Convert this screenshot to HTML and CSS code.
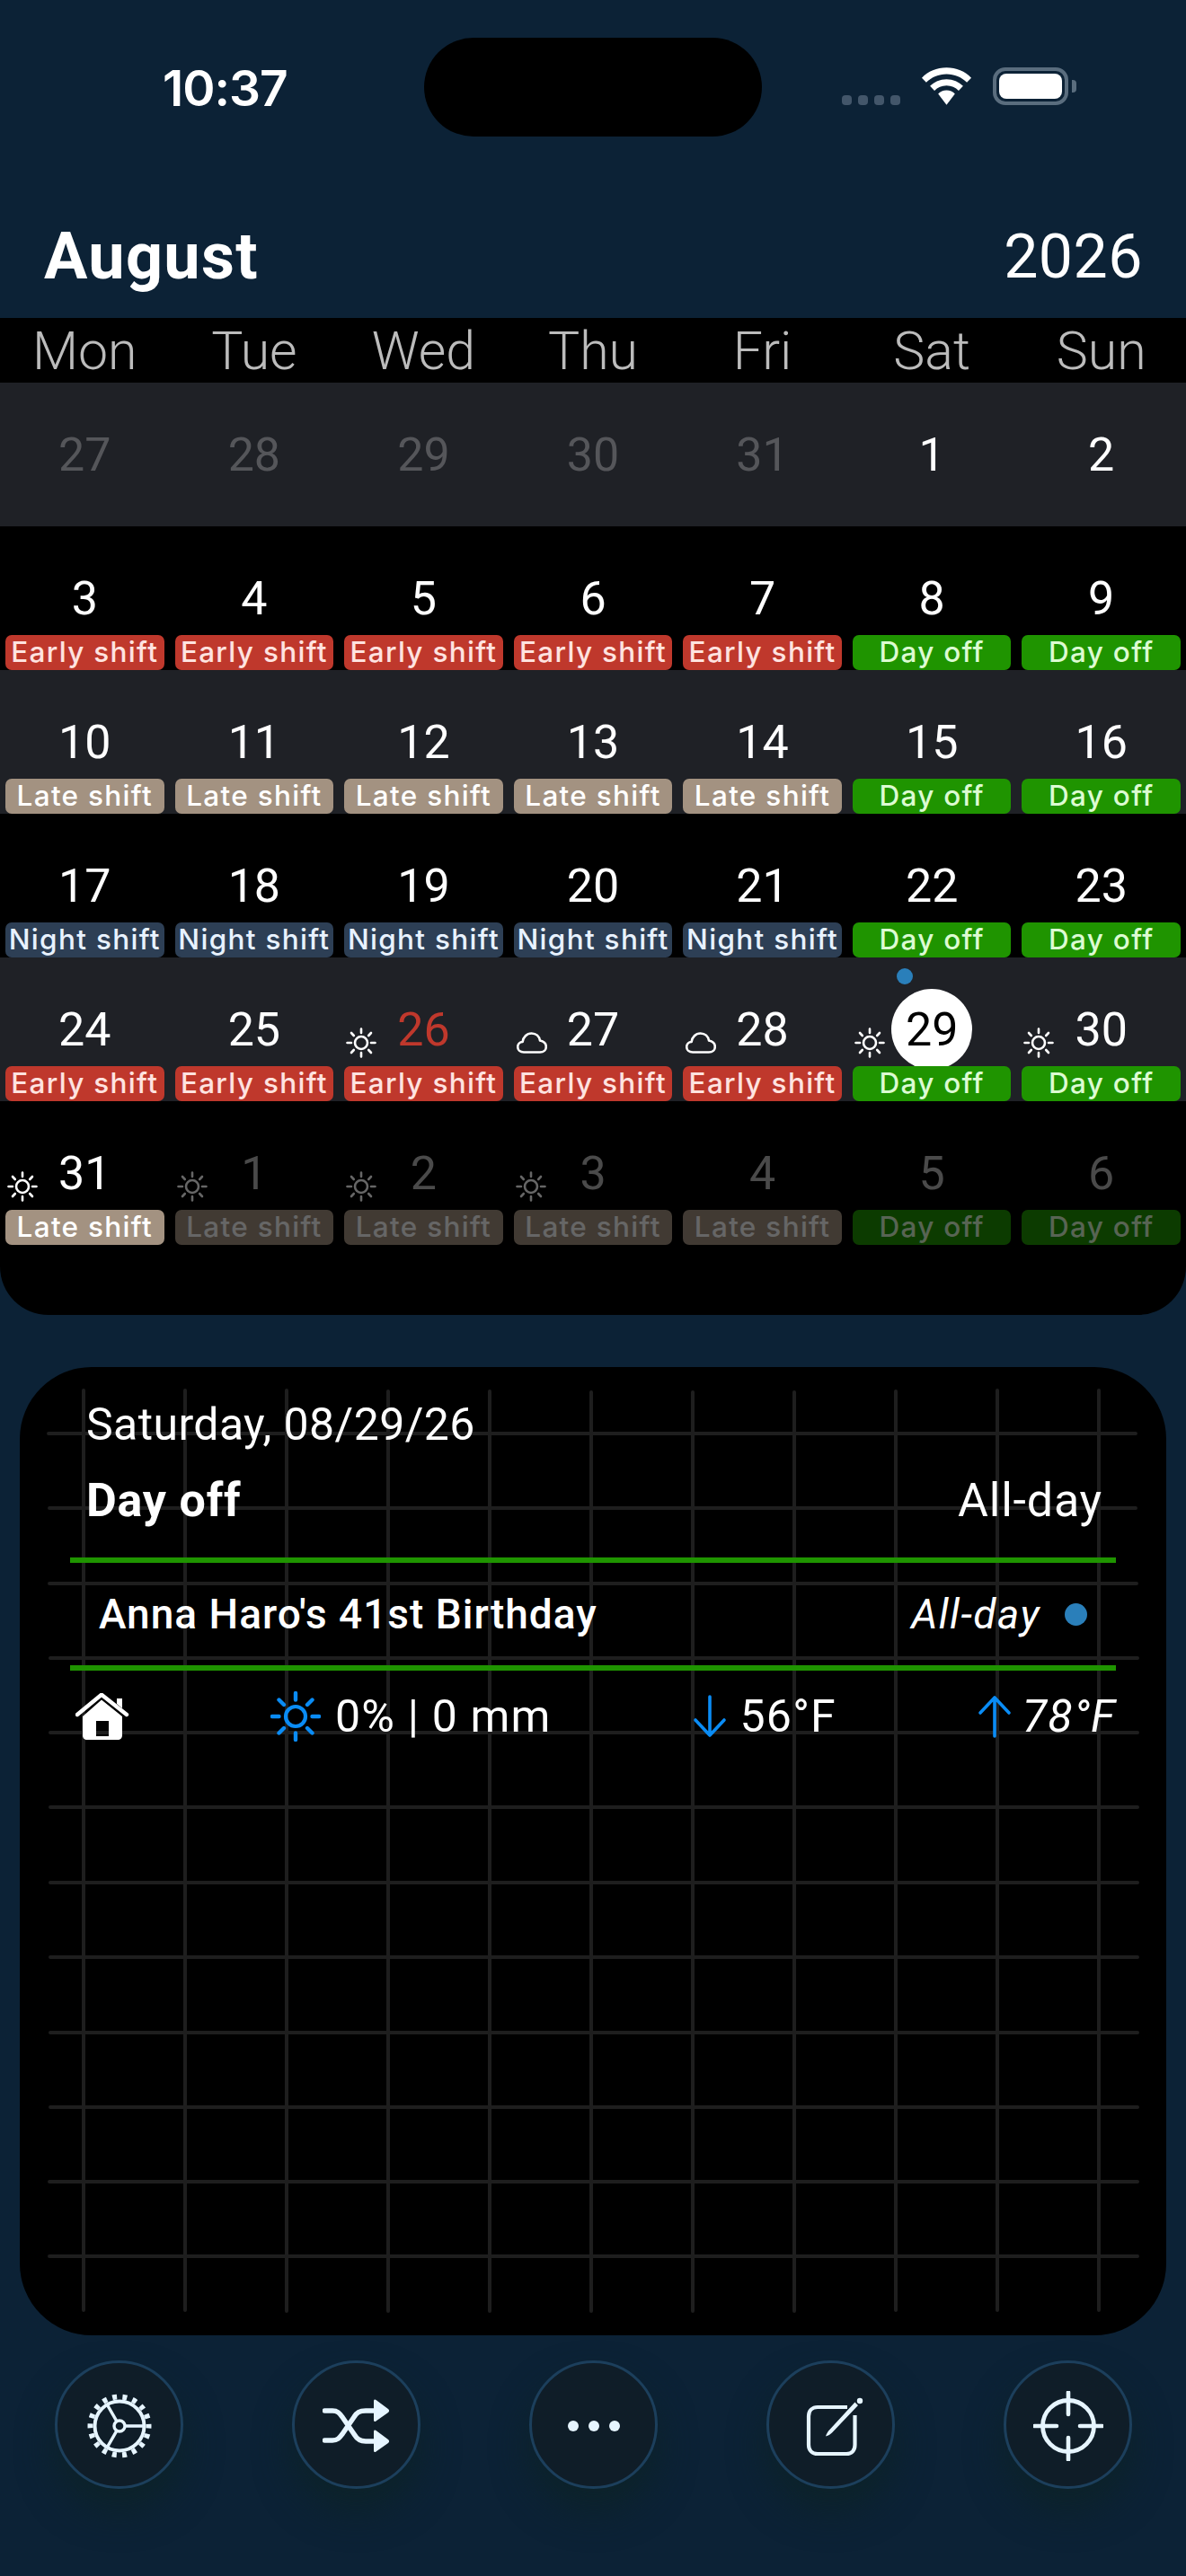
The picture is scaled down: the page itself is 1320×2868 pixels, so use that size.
FILE: index.html
```html
<!DOCTYPE html>
<html lang="en">
<head>
  <meta charset="UTF-8">
  <title>Shift Calendar</title>
  <meta name="viewport" content="width=device-width, initial-scale=1.0">
  <link rel="stylesheet" href="styles.css">
</head>
<body>
  <svg class="sprites" width="0" height="0">
    <symbol id="sun" viewBox="0 0 34 34">
      <circle cx="17" cy="17" r="7" fill="none" stroke="currentColor" stroke-width="2.6"/>
      <g stroke="currentColor" stroke-width="2.6" stroke-linecap="round">
        <path d="M17 1.500V6M17 28V32.500M1.500 17H6M28 17H32.500M6 6L8.800 9M25.200 25L28 28M28 6L25.200 9M8.800 25L6 28"/>
      </g>
    </symbol>
    <symbol id="cloud" viewBox="0 0 34 24">
      <path d="M8 22.500C4 22.500 1.200 20 1.200 16.600C1.200 13.400 3.600 11.200 6.600 11C7.400 5.600 11.200 1.500 16.600 1.500C21.800 1.500 25.200 5 26 9.600C29.800 10.400 32.800 12.600 32.800 16.400C32.800 20 30 22.500 26 22.500Z" fill="none" stroke="currentColor" stroke-width="2.6" stroke-linejoin="round"/>
    </symbol>
  </svg>

  <header class="status-bar">
    <span class="clock">10:37</span>
    <div class="island"></div>
    <div class="status-icons">
      <div class="signal"><i></i><i></i><i></i><i></i></div>
      <svg class="wifi" viewBox="0 0 58 42">
        <path d="M29 0C18 0 8 4.300 1 11.500L6 16.800C11.800 10.900 20 7.300 29 7.300C38 7.300 46.200 10.900 52 16.800L57 11.500C50 4.300 40 0 29 0Z" fill="#fff"/>
        <path d="M29 13C21.600 13 15 16 10.300 20.800L15.300 26C18.800 22.400 23.600 20.200 29 20.200C34.400 20.200 39.200 22.400 42.700 26L47.700 20.800C43 16 36.400 13 29 13Z" fill="#fff"/>
        <path d="M29 25.600C25.200 25.600 21.900 27.100 19.500 29.600L29 42L38.500 29.600C36.100 27.100 32.800 25.600 29 25.600Z" fill="#fff"/>
      </svg>
      <div class="battery"><div class="battery-level"></div></div>
      <div class="battery-nub"></div>
    </div>
  </header>

  <section class="calendar">
    <div class="month-title">
      <h1>August</h1>
      <span class="year">2026</span>
    </div>
    <div class="weekdays">
      <span>Mon</span><span>Tue</span><span>Wed</span><span>Thu</span><span>Fri</span><span>Sat</span><span>Sun</span>
    </div>
    <div class="weeks">
      <div class="week alt">
        <div class="day muted"><span class="num">27</span></div>
        <div class="day muted"><span class="num">28</span></div>
        <div class="day muted"><span class="num">29</span></div>
        <div class="day muted"><span class="num">30</span></div>
        <div class="day muted"><span class="num">31</span></div>
        <div class="day"><span class="num">1</span></div>
        <div class="day"><span class="num">2</span></div>
      </div>
      <div class="week">
        <div class="day"><span class="num">3</span><span class="pill early">Early shift</span></div>
        <div class="day"><span class="num">4</span><span class="pill early">Early shift</span></div>
        <div class="day"><span class="num">5</span><span class="pill early">Early shift</span></div>
        <div class="day"><span class="num">6</span><span class="pill early">Early shift</span></div>
        <div class="day"><span class="num">7</span><span class="pill early">Early shift</span></div>
        <div class="day"><span class="num">8</span><span class="pill off">Day off</span></div>
        <div class="day"><span class="num">9</span><span class="pill off">Day off</span></div>
      </div>
      <div class="week alt">
        <div class="day"><span class="num">10</span><span class="pill late">Late shift</span></div>
        <div class="day"><span class="num">11</span><span class="pill late">Late shift</span></div>
        <div class="day"><span class="num">12</span><span class="pill late">Late shift</span></div>
        <div class="day"><span class="num">13</span><span class="pill late">Late shift</span></div>
        <div class="day"><span class="num">14</span><span class="pill late">Late shift</span></div>
        <div class="day"><span class="num">15</span><span class="pill off">Day off</span></div>
        <div class="day"><span class="num">16</span><span class="pill off">Day off</span></div>
      </div>
      <div class="week">
        <div class="day"><span class="num">17</span><span class="pill night">Night shift</span></div>
        <div class="day"><span class="num">18</span><span class="pill night">Night shift</span></div>
        <div class="day"><span class="num">19</span><span class="pill night">Night shift</span></div>
        <div class="day"><span class="num">20</span><span class="pill night">Night shift</span></div>
        <div class="day"><span class="num">21</span><span class="pill night">Night shift</span></div>
        <div class="day"><span class="num">22</span><span class="pill off">Day off</span></div>
        <div class="day"><span class="num">23</span><span class="pill off">Day off</span></div>
      </div>
      <div class="week alt">
        <div class="day"><span class="num">24</span><span class="pill early">Early shift</span></div>
        <div class="day"><span class="num">25</span><span class="pill early">Early shift</span></div>
        <div class="day"><svg class="wx"><use href="#sun"/></svg><span class="num sunday-red">26</span><span class="pill early">Early shift</span></div>
        <div class="day"><svg class="wx cloud"><use href="#cloud"/></svg><span class="num">27</span><span class="pill early">Early shift</span></div>
        <div class="day"><svg class="wx cloud"><use href="#cloud"/></svg><span class="num">28</span><span class="pill early">Early shift</span></div>
        <div class="day today"><i class="event-dot"></i><svg class="wx"><use href="#sun"/></svg><span class="num">29</span><span class="pill off">Day off</span></div>
        <div class="day"><svg class="wx"><use href="#sun"/></svg><span class="num">30</span><span class="pill off">Day off</span></div>
      </div>
      <div class="week">
        <div class="day"><svg class="wx"><use href="#sun"/></svg><span class="num">31</span><span class="pill late">Late shift</span></div>
        <div class="day muted"><svg class="wx"><use href="#sun"/></svg><span class="num">1</span><span class="pill late">Late shift</span></div>
        <div class="day muted"><svg class="wx"><use href="#sun"/></svg><span class="num">2</span><span class="pill late">Late shift</span></div>
        <div class="day muted"><svg class="wx"><use href="#sun"/></svg><span class="num">3</span><span class="pill late">Late shift</span></div>
        <div class="day muted"><span class="num">4</span><span class="pill late">Late shift</span></div>
        <div class="day muted"><span class="num">5</span><span class="pill off">Day off</span></div>
        <div class="day muted"><span class="num">6</span><span class="pill off">Day off</span></div>
      </div>
    </div>
  </section>

  <section class="panel">
    <svg class="grid" viewBox="0 0 1276 1078">
      <g stroke="#1e1e1e" stroke-width="4" stroke-linecap="round">
        <path d="M71 26V1050M184 26V1050M297 26V1051M410 27V1051M523 27V1051M636 28V1051M749 28V1051M862 28V1051M975 27V1050M1088 26V1050M1201 26V1050"/>
        <path d="M32 74H1242M33 157H1242M33 241H1243M34 324H1244M34 407H1244M34 490H1244M34 574H1244M34 657H1244M34 741H1244M34 824H1244M33 907H1244M33 990H1244"/>
      </g>
    </svg>
    <div class="panel-body">
      <div class="panel-date">Saturday, 08/29/26</div>
      <div class="shift-row">
        <strong>Day off</strong>
        <span>All-day</span>
      </div>
      <div class="event-row">
        <span class="event-name">Anna Haro's 41st Birthday</span>
        <em>All-day</em>
        <i class="event-mark"></i>
      </div>
      <div class="weather-row">
        <svg class="home" viewBox="0 0 60 52">
          <path d="M2 24L29 1.800L57 24" fill="none" stroke="#fff" stroke-width="4.400" stroke-linecap="round" stroke-linejoin="round"/>
          <path d="M46 6H52V17L46 12Z" fill="#fff"/>
          <path d="M29 7.500L52 26V47C52 50 50 52 47 52H13C10 52 8 50 8 47V26ZM23 31V48H37V31Z" fill="#fff" fill-rule="evenodd"/>
        </svg>
        <div class="wx-rain">
          <svg class="wx-sun" viewBox="0 0 56 56">
            <circle cx="28" cy="28" r="11" fill="none" stroke="#0a8cf5" stroke-width="4.200"/>
            <path d="M28 2V9.500M28 46.500V54M2 28H9.500M46.500 28H54M9.500 9.500L15 15M41 41L46.500 46.500M46.500 9.500L41 15M15 41L9.500 46.500" stroke="#0a8cf5" stroke-width="4.400" stroke-linecap="round"/>
          </svg>
          <span>0% | 0 mm</span>
        </div>
        <div class="wx-low">
          <svg class="arrow" viewBox="0 0 38 48"><path d="M19 2V45M3 28L19 45L35 28" fill="none" stroke="#0a8cf5" stroke-width="3.600" stroke-linecap="round" stroke-linejoin="round"/></svg>
          <span>56°F</span>
        </div>
        <div class="wx-high">
          <svg class="arrow" viewBox="0 0 38 48"><path d="M19 46V3M3 20L19 3L35 20" fill="none" stroke="#0a8cf5" stroke-width="3.600" stroke-linecap="round" stroke-linejoin="round"/></svg>
          <em>78°F</em>
        </div>
      </div>
    </div>
  </section>

  <nav class="toolbar">
    <button type="button">
      <svg viewBox="0 0 72 72" width="72" height="72" fill="none" stroke="#e6f5ff">
        <circle cx="36" cy="36" r="32.500" stroke-width="6" stroke-dasharray="5 6.345" stroke-dashoffset="2.500"/>
        <circle cx="36" cy="36" r="27.500" stroke-width="4"/>
        <circle cx="36" cy="36" r="6" stroke-width="3.400"/>
        <path d="M42 36H63M33 30.800L22.500 12.600M33 41.200L22.500 59.400" stroke-width="3.400"/>
      </svg>
    </button>
    <button type="button">
      <svg viewBox="0 0 76 60" width="76" height="60" fill="none">
        <path d="M2.500 13H11C17 13 19 16 22 20L35 39C38 44 41 47 48 47H58M2.500 46H11C17 46 19 43 22 39L35 20C38 15 41 13 48 13H58" stroke="#e6f5ff" stroke-width="5.500" stroke-linecap="round"/>
        <path d="M57 2C57 0.500 58.500 0 59.500 1L73 11C74.500 12 74.500 14 73 15L59.500 24.500C58.500 25.500 57 25 57 23.500Z" fill="#e6f5ff"/>
        <path d="M57 36C57 34.500 58.500 34 59.500 35L73 45C74.500 46 74.500 48 73 49L59.500 58.500C58.500 59.500 57 59 57 57.500Z" fill="#e6f5ff"/>
      </svg>
    </button>
    <button type="button">
      <svg viewBox="0 0 58 12" width="58" height="12" fill="#e6f5ff">
        <circle cx="6" cy="6" r="6"/><circle cx="29" cy="6" r="6"/><circle cx="52" cy="6" r="6"/>
      </svg>
    </button>
    <button type="button">
      <svg viewBox="0 0 72 72" width="72" height="72" fill="none" stroke="#e6f5ff">
        <path d="M62.500 24V57C62.500 63 59 67 53 67H21C15 67 11 63 11 57V25C11 19 15 15 21 15H54" stroke-width="4.200"/>
        <path d="M30 47.500C31 44.500 32.500 42 34 40.500L62.500 9.500L66 13L37 43.500C35 45.500 33 46.500 30 47.500Z" fill="#e6f5ff" stroke="none"/>
        <circle cx="68" cy="8" r="3.200" fill="#e6f5ff" stroke="none"/>
      </svg>
    </button>
    <button type="button">
      <svg viewBox="0 0 78 78" width="78" height="78" fill="none" stroke="#e6f5ff" stroke-linecap="round">
        <circle cx="39" cy="39" r="28.500" stroke-width="4.800"/>
        <path d="M39 1.500V26M39 52V76.500M1.500 39H26M52 39H76.500" stroke-width="4.600"/>
      </svg>
    </button>
  </nav>
</body>
</html>
```

FILE: styles.css
```css
* {
  box-sizing: border-box;
}

body {
  margin: 0;
  width: 1320px;
  height: 2868px;
  overflow: hidden;
  background: #0c2236;
  color: #fff;
  font-family: Roboto, "Liberation Sans", sans-serif;
}

.sprites {
  display: block;
  height: 0;
}

/* status bar */
.status-bar {
  height: 190px;
  padding-top: 42px;
  display: flex;
  align-items: flex-start;
  position: relative;
}

.clock {
  position: absolute;
  left: 181px;
  top: 68px;
  font-size: 55px;
  line-height: 60px;
  font-weight: 600;
  font-family: Inter, sans-serif;
  letter-spacing: -1px;
}

.island {
  width: 376px;
  height: 110px;
  margin-left: 472px;
  border-radius: 55px;
  background: #000;
}

.status-icons {
  display: flex;
  align-items: flex-end;
  margin-left: 89px;
  margin-top: 33px;
  height: 42px;
}

.signal {
  display: flex;
  gap: 7px;
}

.signal i {
  width: 11px;
  height: 11px;
  border-radius: 4px;
  background: #43566a;
}

.wifi {
  width: 57px;
  height: 42px;
  margin-left: 23px;
}

.battery {
  width: 84px;
  height: 42px;
  margin-left: 23px;
  padding: 3px;
  border: 4px solid #5a6d7e;
  border-radius: 14px;
}

.battery-level {
  width: 100%;
  height: 100%;
  background: #fff;
  border-radius: 8px;
}

.battery-nub {
  width: 5px;
  height: 14px;
  margin: 0 0 14px 4px;
  background: #5a6d7e;
  border-radius: 0 4px 4px 0;
}

/* calendar */
.month-title {
  height: 164px;
  padding: 56px 48px 0 49px;
  display: flex;
  justify-content: space-between;
  align-items: flex-start;
}

.month-title h1 {
  margin: 0;
  font-size: 72px;
  line-height: 80px;
  font-weight: 700;
  letter-spacing: 1.3px;
}

.year {
  font-size: 68px;
  line-height: 80px;
  font-weight: 400;
  letter-spacing: 0.5px;
}

.weekdays {
  height: 72px;
  background: #000;
  display: grid;
  grid-template-columns: repeat(7, 1fr);
  align-items: center;
  text-align: center;
  color: #bcbcbc;
  font-size: 59px;
  font-weight: 300;
}

.weeks {
  background: #000;
  height: 1038px;
  border-radius: 0 0 54px 54px;
}

.week {
  height: 160px;
  display: grid;
  grid-template-columns: repeat(7, 1fr);
}

.week.alt {
  background: #1f2126;
}

.day {
  position: relative;
  display: flex;
  flex-direction: column;
  align-items: center;
  padding-top: 51px;
}

.num {
  position: relative;
  font-size: 52px;
  line-height: 60px;
  font-weight: 400;
}

.sunday-red {
  color: #bf382c;
}

.day.muted .num {
  color: #4a4a4a;
}

.week.alt .day.muted .num {
  color: #55565a;
}

.day.muted .pill,
.day.muted .wx {
  opacity: 0.4;
}

.today::before {
  content: "";
  position: absolute;
  left: 50%;
  top: 35px;
  width: 90px;
  height: 90px;
  margin-left: -45px;
  border-radius: 50%;
  background: #fff;
}

.today .num {
  color: #000;
}

.event-dot {
  position: absolute;
  left: 55px;
  top: 12px;
  width: 18px;
  height: 18px;
  border-radius: 50%;
  background: #2a7fba;
}

.wx {
  position: absolute;
  left: 8px;
  top: 78px;
  width: 34px;
  height: 34px;
  color: #fff;
}

.wx.cloud {
  left: 9px;
  top: 83px;
  height: 24px;
}

.pill {
  position: absolute;
  left: 6px;
  right: 6px;
  bottom: 0;
  height: 39px;
  border-radius: 7px;
  text-align: center;
  font-family: Inter, sans-serif;
  font-size: 31.500px;
  line-height: 38px;
  font-weight: 500;
  letter-spacing: 1.3px;
  white-space: nowrap;
}

.early {
  background: #bf382c;
  color: #ffe3e0;
}

.late {
  background: #a39281;
  color: #fff;
}

.night {
  background: #2d3f55;
  color: #e8f2ff;
}

.off {
  background: #1f9400;
  color: #dcfbd2;
}

/* detail panel */
.panel {
  position: relative;
  width: 1276px;
  height: 1078px;
  margin: 58px 0 0 22px;
  border-radius: 80px;
  background: #000;
  overflow: hidden;
}

.grid {
  position: absolute;
  left: 0;
  top: 0;
  width: 100%;
  height: 100%;
}

.panel-body {
  position: relative;
  padding: 34px 56px 0;
  font-size: 50px;
}

.panel-date {
  padding-left: 18px;
  line-height: 60px;
  letter-spacing: 0.4px;
}

.shift-row {
  display: flex;
  justify-content: space-between;
  padding: 25px 15px 0 18px;
  height: 124px;
  font-size: 52px;
  line-height: 60px;
  letter-spacing: 0.8px;
  border-bottom: 6px solid #1f9400;
}

.shift-row strong {
  font-weight: 700;
}

.event-row {
  display: flex;
  align-items: center;
  height: 120px;
  padding: 0 32px;
  border-bottom: 6px solid #1f9400;
  font-size: 46px;
  letter-spacing: 1px;
}

.event-name {
  font-weight: 500;
  flex: 1;
}

.event-row em {
  letter-spacing: 1.5px;
}

.event-mark {
  width: 25px;
  height: 25px;
  margin-left: 27px;
  border-radius: 50%;
  background: #2a7fba;
}

.weather-row {
  display: flex;
  align-items: center;
  justify-content: space-between;
  height: 102px;
  letter-spacing: 1.2px;
}

.home {
  width: 60px;
  height: 52px;
  margin-left: 6px;
}

.wx-rain,
.wx-low,
.wx-high {
  display: flex;
  align-items: center;
}

.wx-sun {
  width: 56px;
  height: 56px;
  margin-right: 16px;
}

.arrow {
  width: 38px;
  height: 48px;
  margin-right: 15px;
}

.wx-high .arrow {
  margin-right: 12px;
}

/* bottom buttons */
.toolbar {
  display: flex;
  gap: 121px;
  padding: 28px 0 0 61px;
}

.toolbar button {
  width: 143px;
  height: 143px;
  padding: 3px 0 0;
  display: flex;
  align-items: center;
  justify-content: center;
  border: 3px solid #1c3f5c;
  border-radius: 50%;
  background: #0f1d28;
  box-shadow: 0 24px 40px rgba(12, 34, 40, 0.9);
}
```
